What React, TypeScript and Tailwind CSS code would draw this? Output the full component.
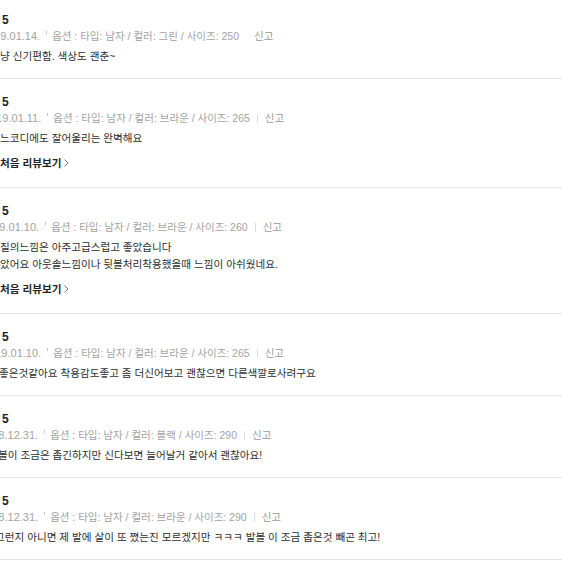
import React from "react";

type Review = {
  date: string;
  dateDx: number;
  opts: string;
  bar: boolean;
  lines: string[];
  textDx: number;
  more?: boolean;
};

const reviews: Review[] = [
  {
    date: "2019.01.14.",
    dateDx: -18,
    opts: "옵션 : 타입: 남자 / 컬러: 그린 / 사이즈: 250",
    bar: false,
    lines: ["냥 신기편함. 색상도 괜춘~"],
    textDx: 0,
  },
  {
    date: "2019.01.11.",
    dateDx: -16,
    opts: "옵션 : 타입: 남자 / 컬러: 브라운 / 사이즈: 265",
    bar: true,
    lines: ["느코디에도 잘어울리는 완벽해요"],
    textDx: 0,
    more: true,
  },
  {
    date: "2019.01.10.",
    dateDx: -19,
    opts: "옵션 : 타입: 남자 / 컬러: 브라운 / 사이즈: 260",
    bar: true,
    lines: [
      "질의느낌은 아주고급스럽고 좋았습니다",
      "았어요 아웃솔느낌이나 뒷볼처리착용했을때 느낌이 아쉬웠네요.",
    ],
    textDx: 0,
    more: true,
  },
  {
    date: "2019.01.10.",
    dateDx: -17,
    opts: "옵션 : 타입: 남자 / 컬러: 브라운 / 사이즈: 265",
    bar: true,
    lines: ["좋은것같아요 착용감도좋고 좀 더신어보고 괜찮으면 다른색깔로사려구요"],
    textDx: -1,
  },
  {
    date: "2018.12.31.",
    dateDx: -20,
    opts: "옵션 : 타입: 남자 / 컬러: 블랙 / 사이즈: 290",
    bar: true,
    lines: ["볼이 조금은 좁긴하지만 신다보면 늘어날거 같아서 괜찮아요!"],
    textDx: -2,
  },
  {
    date: "2018.12.31.",
    dateDx: -20,
    opts: "옵션 : 타입: 남자 / 컬러: 브라운 / 사이즈: 290",
    bar: true,
    lines: [
      "그런지 아니면 제 발에 살이 또 쪘는진 모르겠지만 ㅋㅋㅋ 발볼 이 조금 좁은것 빼곤 최고!",
    ],
    textDx: -5,
  },
];

function ReviewRow({ r }: { r: Review }) {
  return (
    <div className="border-b border-[#e6e6e6] pt-[16px] pb-[13px] overflow-hidden">
      <div className="pl-[2px] text-[12px] leading-[14px] font-bold text-[#222]">5</div>
      <div className="mt-[2px] flex items-center whitespace-nowrap text-[10.5px] leading-[14px] text-[#a3a3a3]">
        <span className="text-[11px]" style={{ marginLeft: r.dateDx }}>
          {r.date}
        </span>
        <span className="ml-[6px] mr-[5px] self-start mt-[2px] w-px h-[3px] bg-[#c4c4c4]" />
        <span>{r.opts}</span>
        <span
          className={
            r.bar
              ? "mx-[7px] w-px h-[9px] bg-[#dcdcdc]"
              : "mx-[7px] w-px h-[9px] bg-transparent"
          }
        />
        <span className="text-[#9a9a9a]">신고</span>
      </div>
      <div className="mt-[5px] text-[10.6px] leading-[17px] text-[#2e2e2e] whitespace-nowrap">
        {r.lines.map((l, i) => (
          <div key={i} style={{ marginLeft: r.textDx }}>
            {l}
          </div>
        ))}
      </div>
      {r.more && (
        <div className="mt-[8px] mb-[3px] flex items-center gap-[3px] text-[10.6px] leading-[16px] font-bold text-[#222]">
          <span>처음 리뷰보기</span>
          <svg width="5" height="8" viewBox="0 0 5 8" fill="none">
            <path d="M0.5 0.5L4 4L0.5 7.5" stroke="#777" strokeWidth="1" />
          </svg>
        </div>
      )}
    </div>
  );
}

export default function App() {
  return (
    <div
      className="w-[562px] h-[562px] bg-white overflow-hidden"
      style={{ fontFamily: '"Liberation Sans", "Noto Sans CJK KR", sans-serif' }}
    >
      <div className="-mt-[3px]">
        {reviews.map((r, i) => (
          <ReviewRow key={i} r={r} />
        ))}
      </div>
    </div>
  );
}
